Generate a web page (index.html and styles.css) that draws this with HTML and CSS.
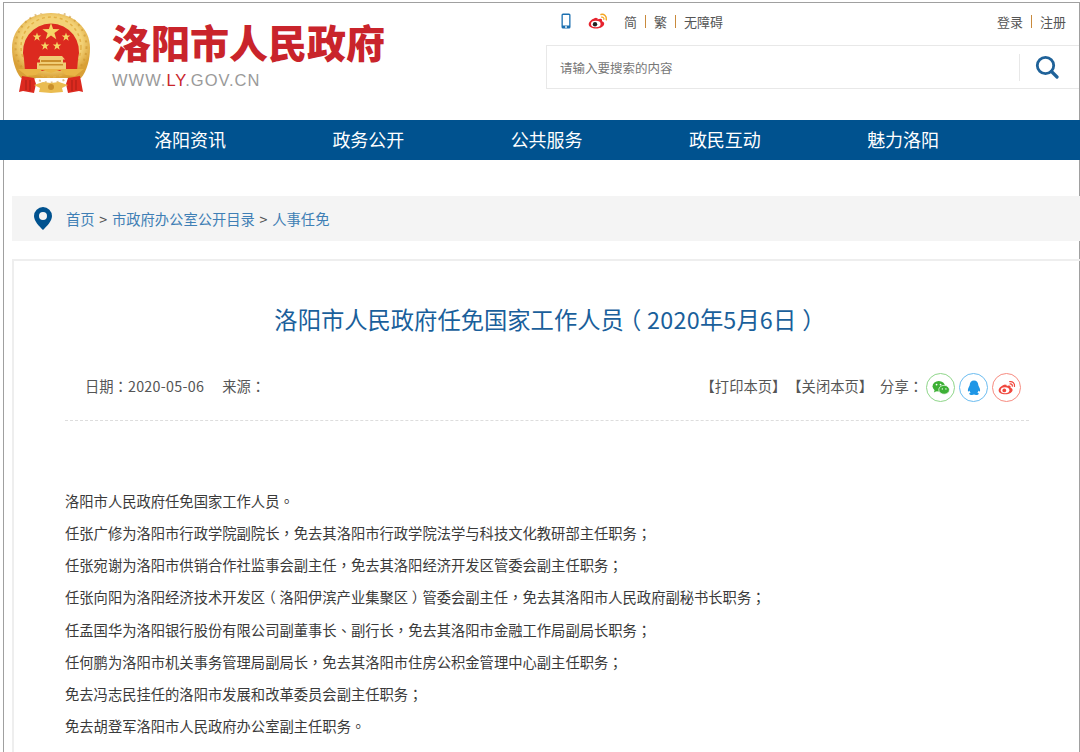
FILE: index.html
```html
<!DOCTYPE html>
<html lang="zh-CN">
<head>
<meta charset="utf-8">
<title>洛阳市人民政府任免国家工作人员</title>
<link rel="stylesheet" href="styles.css">
</head>
<body>
<div class="frame">
  <header class="head">
    <div class="brand">
      <svg class="emblem" viewBox="0 0 78 80" width="78" height="80">
        <defs>
          <radialGradient id="gold" cx="50%" cy="45%" r="55%"><stop offset="72%" stop-color="#f3d277"/><stop offset="100%" stop-color="#d9a036"/></radialGradient>
          <path id="star" d="M0-1 .235-.324.951-.309.380.124.588.809 0 .4-.588.809-.380.124-.951-.309-.235-.324z" fill="#f6d565"/>
        </defs>
        <path d="M9 65C3 58 0 46 0 35 0 15 17 0 39 0s39 15 39 35c0 11-3 23-9 30z" fill="url(#gold)"/>
        <circle cx="39" cy="34" r="35.500" fill="none" stroke="#c98f2a" stroke-width="2" stroke-dasharray="2 4" opacity=".55"/>
        <circle cx="39" cy="34" r="30" fill="none" stroke="#e3b046" stroke-width="1.500" stroke-dasharray="3 3"/>
        <path d="M12 46a28 28 0 1 1 54 0l-1 12H13z" fill="#dc2a1f"/>
        <use href="#star" transform="translate(39 19) scale(9)"/>
        <use href="#star" transform="translate(25 24) scale(4.500)"/>
        <use href="#star" transform="translate(54 24) scale(4.500)"/>
        <use href="#star" transform="translate(33 33) scale(4.500)"/>
        <use href="#star" transform="translate(45 33) scale(4.500)"/>
        <path d="M28 43h22l3 3.500h-2v3h3v6.500H25v-6.500h3v-3h-2z" fill="#f0cd74"/>
        <path d="M29 47h20v2H29zM27 51h24v1.500H27z" fill="#c98f2a"/>
        <path d="M6 56h66l-9 7-9-1-6-5-9 3-9-3-6 5-9 1z" fill="#e9b545"/>
        <path d="M10 63l12 2 2 6-2 9-11-2-4 1zM68 63l-12 2-2 6 2 9 11-2 4 1z" fill="#dc2a1f"/>
        <path d="M14 67v10M18 67v11M64 67v10M60 67v11" stroke="#a91f17" stroke-width="1"/>
        <path d="M22 72l9-3 8 1 8-1 9 3-6 3 1 4-12 1-12-1 1-4z" fill="#eabc50"/>
        <circle cx="39" cy="74" r="3" fill="#c98f2a"/>
      </svg>
      <div class="brand-text">
        <div class="brand-name">洛阳市人民政府</div>
        <div class="brand-url">WWW.<span class="brand-ly">LY</span>.GOV.CN</div>
      </div>
    </div>
    <div class="tools">
      <div class="tool-row">
        <div class="tool-left">
          <svg class="tool-phone" viewBox="0 0 10 16" width="10" height="16"><rect x="0.500" y="0.500" width="9" height="15" rx="1.500" fill="#1a6fb0"/><rect x="1.800" y="2" width="6.400" height="10.500" fill="#fff"/><circle cx="5" cy="14" r="0.900" fill="#fff"/></svg>
          <svg class="tool-weibo" viewBox="0 0 20 16" width="20" height="16"><use href="#wb"/></svg>
          <span class="tool-links"><a>简</a><i></i><a>繁</a><i></i><a>无障碍</a></span>
        </div>
        <span class="tool-links"><a>登录</a><i></i><a>注册</a></span>
      </div>
      <div class="search">
        <span class="search-ph">请输入要搜索的内容</span>
        <span class="search-btn">
          <svg viewBox="0 0 24 24" width="24" height="24"><circle cx="10.500" cy="10.500" r="8.200" fill="none" stroke="#1f6299" stroke-width="2.800"/><path d="M16.500 16.500l5.500 5.500" stroke="#1f6299" stroke-width="3.200" stroke-linecap="round"/></svg>
        </span>
      </div>
    </div>
  </header>
  <nav class="nav">
    <a>洛阳资讯</a><a>政务公开</a><a>公共服务</a><a>政民互动</a><a>魅力洛阳</a>
  </nav>
  <div class="crumb">
    <svg viewBox="0 0 18 23" width="18" height="23"><path fill-rule="evenodd" d="M9 0a9 9 0 0 1 9 9c0 5-5 10-9 14C5 19 0 14 0 9a9 9 0 0 1 9-9zm0 5a4 4 0 1 0 0 8 4 4 0 0 0 0-8z" fill="#00528f"/></svg>
    <span class="crumb-text"><a>首页</a> <b>&gt;</b> <a>市政府办公室公开目录</a> <b>&gt;</b> <a>人事任免</a></span>
  </div>
  <main class="panel">
    <h1 class="title">洛阳市人民政府任免国家工作人员<span class="par">（</span><span class="title-num">2020</span>年<span class="title-num">5</span>月<span class="title-num">6</span>日<span class="par">）</span></h1>
    <div class="meta">
      <div class="meta-left"><span>日期<span class="pn">：</span><span class="meta-num">2020-05-06</span></span><span>来源<span class="pn">：</span></span></div>
      <div class="meta-right">
        <span class="meta-act">【打印本页】</span><span class="meta-act">【关闭本页】</span><span class="meta-share">分享<span class="pn">：</span></span>
        <span class="share share-wx">
          <svg viewBox="0 0 20 18" width="18" height="16"><ellipse cx="7.500" cy="7" rx="7" ry="6" fill="#3db035"/><path d="M3 11l-1 3 4-2z" fill="#3db035"/><ellipse cx="13.500" cy="11" rx="6" ry="5" fill="#3db035" stroke="#fff" stroke-width="0.800"/><circle cx="5" cy="5.200" r="1" fill="#fff"/><circle cx="9.500" cy="5.200" r="1" fill="#fff"/><circle cx="11.500" cy="10" r="0.800" fill="#fff"/><circle cx="15.500" cy="10" r="0.800" fill="#fff"/></svg>
        </span>
        <span class="share share-qq">
          <svg viewBox="0 0 16 18" width="14" height="16"><path d="M8 0.500c3 0 4.800 2.200 4.900 5 0.100 1.300 1.100 2.300 1.700 4 0.600 1.800 0.500 3.500-0.200 3.500-0.400 0-0.900-0.600-1.200-1.200-0.200 1-0.700 1.800-1.400 2.400 0.900 0.300 1.600 0.800 1.600 1.400 0 0.800-1.500 1.400-3.100 1.400-1 0-1.800-0.200-2.300-0.500-0.500 0.300-1.300 0.500-2.300 0.500-1.600 0-3.100-0.600-3.100-1.400 0-0.600 0.700-1.100 1.600-1.400-0.700-0.600-1.200-1.400-1.400-2.400-0.300 0.600-0.800 1.200-1.200 1.200-0.700 0-0.800-1.700-0.200-3.500 0.600-1.700 1.600-2.700 1.700-4C3.200 2.700 5 0.500 8 0.500z" fill="#1e96e6"/></svg>
        </span>
        <span class="share share-wb">
          <svg viewBox="0 0 20 16" width="18" height="15"><path d="M8.300 4.700C4.600 5.300 0.700 8.500 0.700 11.200c0 2.500 3.300 4.300 7.300 4.300 4.800 0 8.200-2.500 8.200-4.800 0-1.500-1.300-2.100-2.300-2.400 0.500-1.400 0.100-2.700-1.900-2.500-1.100 0.100-1.800 0.700-2.400 0.600 0.200-1-0.200-1.700-1.300-1.200z" fill="#f0483e"/><ellipse cx="7.800" cy="11" rx="4.800" ry="3.300" fill="#fff"/><circle cx="7" cy="11.200" r="2.100" fill="#f0483e"/><path d="M13 1.500c3-0.700 6 1.800 5.300 5.300M13.500 4.100c1.500-0.300 2.700 0.900 2.400 2.400" stroke="#f0483e" stroke-width="1.400" fill="none" stroke-linecap="round"/></svg>
        </span>
      </div>
    </div>
    <article class="body">
      <p>洛阳市人民政府任免国家工作人员<span class="pn">。</span></p>
      <p>任张广修为洛阳市行政学院副院长<span class="pn">，</span>免去其洛阳市行政学院法学与科技文化教研部主任职务<span class="pn">；</span></p>
      <p>任张宛谢为洛阳市供销合作社监事会副主任<span class="pn">，</span>免去其洛阳经济开发区管委会副主任职务<span class="pn">；</span></p>
      <p>任张向阳为洛阳经济技术开发区<span class="par">（</span>洛阳伊滨产业集聚区<span class="par">）</span>管委会副主任<span class="pn">，</span>免去其洛阳市人民政府副秘书长职务<span class="pn">；</span></p>
      <p>任孟国华为洛阳银行股份有限公司副董事长<span class="pn">、</span>副行长<span class="pn">，</span>免去其洛阳市金融工作局副局长职务<span class="pn">；</span></p>
      <p>任何鹏为洛阳市机关事务管理局副局长<span class="pn">，</span>免去其洛阳市住房公积金管理中心副主任职务<span class="pn">；</span></p>
      <p>免去冯志民挂任的洛阳市发展和改革委员会副主任职务<span class="pn">；</span></p>
      <p>免去胡登军洛阳市人民政府办公室副主任职务<span class="pn">。</span></p>
    </article>
  </main>
</div>
<svg class="defs" width="0" height="0">
  <symbol id="wb" viewBox="0 0 20 16">
    <path d="M8.300 4.700C4.600 5.300 0.700 8.500 0.700 11.200c0 2.500 3.300 4.300 7.300 4.300 4.800 0 8.200-2.500 8.200-4.800 0-1.500-1.300-2.100-2.300-2.400 0.500-1.400 0.100-2.700-1.900-2.500-1.100 0.100-1.800 0.700-2.400 0.600 0.200-1-0.200-1.700-1.300-1.200z" fill="#e6232e"/>
    <ellipse cx="7.800" cy="11" rx="4.800" ry="3.300" fill="#fff"/>
    <circle cx="7" cy="11.200" r="2.200" fill="#222"/>
    <path d="M13 1.500c3-0.700 6 1.800 5.300 5.300" stroke="#f5a623" stroke-width="1.500" fill="none" stroke-linecap="round"/>
    <path d="M13.500 4.100c1.500-0.300 2.700 0.900 2.400 2.400" stroke="#f5a623" stroke-width="1.200" fill="none" stroke-linecap="round"/>
  </symbol>
</svg>
</body>
</html>
```
FILE: styles.css
```css
* { box-sizing: border-box; }
html, body { margin: 0; padding: 0; background: #fff; }
body {
  height: 752px;
  overflow: hidden;
  font-family: "Noto Sans CJK SC", "Liberation Sans", sans-serif;
  color: #3a3a3a;
  font-size: 14.300px;
}
a { color: inherit; text-decoration: none; }
.defs { position: absolute; }
.pn {
  font-family: "Noto Sans CJK TC", "Noto Sans CJK SC", sans-serif;
  font-feature-settings: "locl" 0;
}
.par {
  font-feature-settings: "halt" 1;
  padding: 0 0.250em;
}
.frame {
  height: 752px;
  margin: 2px 0 0 3px;
  border-top: 1px solid #a0a0a0;
  border-left: 1px solid #a0a0a0;
  border-right: 1px solid #a0a0a0;
}
.head {
  height: 117px;
  display: flex;
  justify-content: space-between;
}
.brand {
  display: flex;
  margin: 10px 0 0 8px;
  gap: 22px;
}
.emblem { display: block; }
.brand-text { padding-top: 3px; }
.brand-name {
  font-size: 39px;
  line-height: 50px;
  font-weight: 900;
  color: #c9242b;
  white-space: nowrap;
}
.brand-url {
  font-family: "Liberation Sans", sans-serif;
  font-size: 16.500px;
  line-height: 20px;
  margin-top: 4px;
  letter-spacing: 1px;
  color: #9a9a9a;
}
.brand-ly { color: #c9242b; }
.tools {
  width: 533px;
  padding-top: 9px;
}
.tool-row {
  display: flex;
  justify-content: space-between;
  align-items: center;
  height: 18px;
  padding: 0 13px 0 15px;
  font-size: 13px;
  color: #555;
}
.tool-left { display: flex; align-items: center; }
.tool-weibo { margin: 0 0 0 17px; }
.tool-left .tool-links { margin-left: 16px; }
.tool-links { display: flex; align-items: center; gap: 8px; }
.tool-links i {
  display: block;
  width: 1px;
  height: 13px;
  background: #c98a3c;
}
.search {
  margin-top: 15px;
  height: 44px;
  border: 1px solid #e8e8e8;
  border-right: 0;
  display: flex;
  justify-content: space-between;
  align-items: center;
  padding-left: 13px;
}
.search-ph { font-size: 12.500px; color: #777; }
.search-btn {
  display: flex;
  align-items: center;
  justify-content: center;
  width: 60px;
  height: 27px;
  padding-right: 5px;
  border-left: 1px solid #e8e8e8;
}
.nav {
  margin: 0 -1px 0 -4px;
  height: 40px;
  background: #00528f;
  display: flex;
  padding-left: 101px;
}
.nav a {
  width: 178.250px;
  text-align: center;
  color: #fff;
  font-size: 18px;
  line-height: 39px;
}
.crumb {
  margin: 36px -1px 0 8px;
  height: 45px;
  padding: 0 0 1px 22px;
  background: #f4f4f4;
  display: flex;
  align-items: center;
  gap: 14px;
}
.crumb-text { color: #3f7fb5; }
.crumb-text b { font-weight: 400; color: #555; margin: 0 1.500px; }
.panel {
  margin: 18px -1px 0 8px;
  border: 2px solid #eee;
  border-right: 0;
  padding: 0 51px;
  height: 520px;
}
.title {
  margin: 0;
  padding: 40px 0 0 0;
  text-align: center;
  font-size: 23.300px;
  line-height: 36px;
  font-weight: 400;
  color: #1a5f9b;
}
.title-num { letter-spacing: 0.300px; }
.meta {
  margin-top: 34px;
  height: 50px;
  padding: 0 8px 0 20px;
  border-bottom: 1px dashed #ddd;
  display: flex;
  justify-content: space-between;
  align-items: flex-start;
  line-height: 30px;
  color: #555;
}
.meta-num { letter-spacing: 0.300px; }
.meta-left { display: flex; gap: 18px; }
.meta-right { display: flex; align-items: flex-start; }
.meta-act + .meta-act { margin-left: 1px; }
.meta-share { margin: 0 3px 0 7px; }
.share {
  width: 29px;
  height: 29px;
  margin-top: 2px;
  border-radius: 50%;
  border: 1px solid;
  display: flex;
  align-items: center;
  justify-content: center;
}
.share + .share { margin-left: 4px; }
.share-wx { border-color: #8fd68a; }
.share-qq { border-color: #6bbcf0; }
.share-wb { border-color: #f78b80; }
.body { padding-top: 64px; }
.body p {
  margin: 0;
  line-height: 32.150px;
  white-space: nowrap;
}
```
